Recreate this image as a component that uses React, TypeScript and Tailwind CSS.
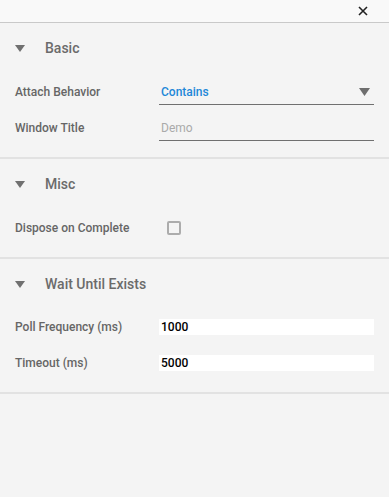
import React from "react";

const Tri = ({ className = "" }: { className?: string }) => (
  <svg width="10" height="7" viewBox="0 0 10 7" className={className}>
    <polygon points="0,0 10,0 5,7" fill="#707070" />
  </svg>
);

function Header({ title }: { title: string }) {
  return (
    <div className="h-[48px] flex items-center">
      <div className="w-[45px] pl-[15px] flex items-center">
        <Tri />
      </div>
      <span className="text-[14px] font-medium text-[#6b6b6b]">{title}</span>
    </div>
  );
}

function Row({ label, children }: { label: string; children: React.ReactNode }) {
  return (
    <div className="h-[36px] flex items-center">
      <div className="w-[159px] pl-[15px] text-[12px] font-medium text-[#666]">{label}</div>
      <div className="flex-1 pr-[15px]">{children}</div>
    </div>
  );
}

function Section({ title, children }: { title: string; children: React.ReactNode }) {
  return (
    <div className="border-b-2 border-[#e2e2e2] pt-[1px] pb-[11px]">
      <Header title={title} />
      <div className="mt-[2px]">{children}</div>
    </div>
  );
}

export default function App() {
  return (
    <div
      className="w-[389px] min-h-[497px] bg-[#f4f4f4]"
      style={{ fontFamily: "Roboto, 'Liberation Sans', sans-serif" }}
    >
      <div className="h-[23px] bg-[#f9f9f9] border-b border-[#c9c9c9] flex items-center justify-end pr-[21px]">
        <svg width="10" height="10" viewBox="0 0 10 10">
          <path d="M1 1 L9 9 M9 1 L1 9" stroke="#222" strokeWidth="1.6" />
        </svg>
      </div>
      <Section title="Basic">
        <Row label="Attach Behavior">
          <div className="h-[26px] flex items-center justify-between border-b border-[#707070] pl-[2px] pr-[4px]">
            <span className="text-[12px] font-medium text-[#1e88d8]">Contains</span>
            <svg width="11" height="8" viewBox="0 0 11 8">
              <polygon points="0,0 11,0 5.5,8" fill="#6e6e6e" />
            </svg>
          </div>
        </Row>
        <Row label="Window Title">
          <div className="h-[25px] flex items-center border-b border-[#707070] pl-[2px]">
            <span className="text-[12px] text-[#aaa]">Demo</span>
          </div>
        </Row>
      </Section>
      <Section title="Misc">
        <Row label="Dispose on Complete">
          <div className="pl-[8px] flex items-center">
            <div className="w-[14px] h-[14px] border-2 border-[#acacac] rounded-[2px]" />
          </div>
        </Row>
      </Section>
      <div className="border-b-2 border-[#e2e2e2] pt-[1px] pb-[11px]">
        <Header title="Wait Until Exists" />
        <div className="mt-[1px]">
          <Row label="Poll Frequency (ms)">
            <div className="h-[16px] bg-white flex items-center pl-[2px] text-[12px] text-black font-medium">1000</div>
          </Row>
          <Row label="Timeout (ms)">
            <div className="h-[16px] bg-white flex items-center pl-[2px] text-[12px] text-black font-medium">5000</div>
          </Row>
        </div>
      </div>
    </div>
  );
}
